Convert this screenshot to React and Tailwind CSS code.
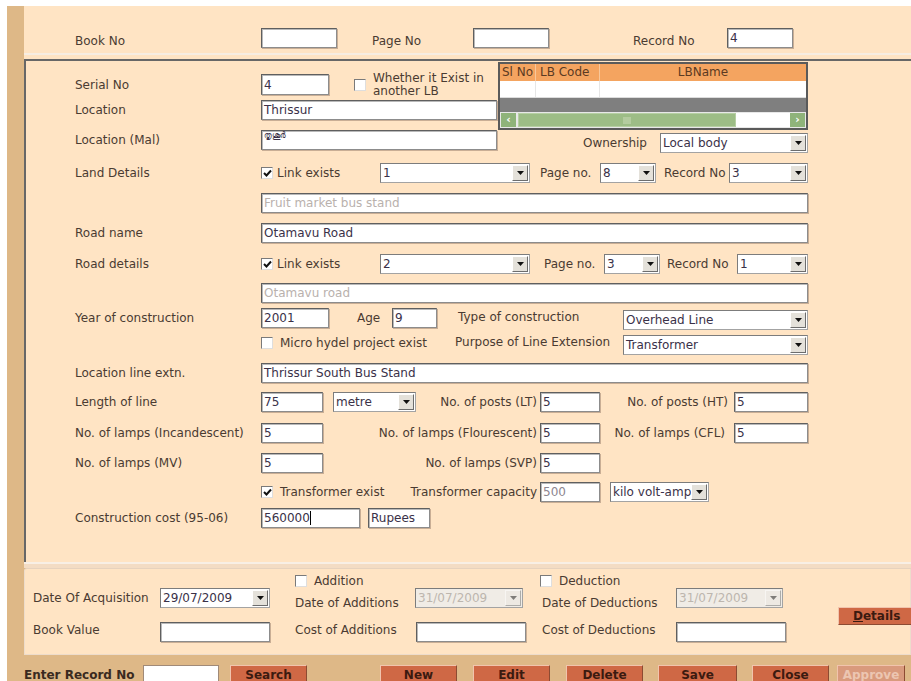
import React from "react";

const Arrow = () => (
  <svg width="7" height="4" viewBox="0 0 7 4">
    <polygon points="0,0 7,0 3.5,4" fill="#111" />
  </svg>
);

function Field({ w, value = "", muted = false, caret = false, h = "h-[20px]" }) {
  return (
    <div
      className={`${h} ${w} shrink-0 bg-white border border-[#5f5f5f] border-b-[#8c8c8c] border-r-[#8c8c8c] shadow-[inset_1px_1px_0_#b9b9b9,1px_1px_0_#c9ae95] px-[2px] flex items-center whitespace-nowrap overflow-hidden ${
        muted ? "text-[#b9b1ad]" : "text-[#3a3148]"
      }`}
    >
      {value}
      {caret && <span className="inline-block w-[1px] h-[14px] bg-black" />}
    </div>
  );
}

function Select({ w, value = "", disabled = false }) {
  return (
    <div
      className={`h-[20px] ${w} shrink-0 flex items-stretch border border-[#a3a3a3] border-t-[#7c7c7c] border-l-[#7c7c7c] ${
        disabled ? "bg-[#f0ece6] text-[#bdb6ae]" : "bg-white text-[#3a3148]"
      }`}
    >
      <div className="flex-1 px-[2px] flex items-center overflow-hidden whitespace-nowrap">{value}</div>
      <div
        className={`w-[16px] my-[1px] mr-[1px] flex items-center justify-center border border-t-white border-l-white border-b-[#6d6d6d] border-r-[#6d6d6d] ${
          disabled ? "bg-[#ebe8e2] opacity-50" : "bg-[#e4e1da]"
        }`}
      >
        <Arrow />
      </div>
    </div>
  );
}

function Check({ checked = false }) {
  return (
    <div className="w-[12px] h-[12px] shrink-0 bg-white border border-[#7a7a7a] border-b-[#dedede] border-r-[#dedede] flex items-center justify-center">
      {checked && (
        <svg width="9" height="8" viewBox="0 0 9 8">
          <path d="M1 4 L3.5 6.5 L8 1.5" stroke="#111" strokeWidth="2" fill="none" />
        </svg>
      )}
    </div>
  );
}

function Label({ w = "w-[186px]", children, className = "" }) {
  return <div className={`${w} shrink-0 whitespace-nowrap ${className}`}>{children}</div>;
}

function Btn({ w, children, faded = false }) {
  return (
    <div
      className={`${w} h-[20px] shrink-0 flex items-center justify-center font-bold border border-t-[#f1c4ad] border-l-[#f1c4ad] border-b-[#8c4b32] border-r-[#8c4b32] ${
        faded ? "bg-[#d99a7d] text-[#ecc6b2]" : "bg-[#cf6845] text-[#3b1a10]"
      }`}
    >
      {children}
    </div>
  );
}

function LbGrid() {
  return (
    <div className="w-[310px] h-[68px] shrink-0 border-2 border-[#5a5a5a] flex flex-col bg-[#7f7f7f]">
      <div className="h-[17px] bg-[#f4a460] flex text-[#5b3a22]">
        <div className="w-[36px] border-r border-[#f8c79a] pl-[2px] leading-[17px]">Sl No</div>
        <div className="w-[64px] border-r border-[#f8c79a] pl-[4px] leading-[17px]">LB Code</div>
        <div className="flex-1 text-center leading-[17px]">LBName</div>
      </div>
      <div className="h-[17px] bg-white flex border-b border-[#dcdcdc]">
        <div className="w-[36px] border-r border-[#e6e6e6]" />
        <div className="w-[64px] border-r border-[#e6e6e6]" />
        <div className="flex-1" />
      </div>
      <div className="flex-1" />
      <div className="h-[16px] bg-[#e8e8e8] flex items-stretch p-[1px]">
        <div className="w-[15px] bg-[#8fb37a] text-white text-[11px] leading-[13px] text-center font-bold">‹</div>
        <div className="w-[218px] ml-[2px] bg-[#9dbd86] border border-[#b6cfa3] flex items-center justify-center">
          <div className="w-[8px] h-[7px] bg-[#b4cc9f]" />
        </div>
        <div className="flex-1 bg-white" />
        <div className="w-[15px] bg-[#8fb37a] text-white text-[11px] leading-[13px] text-center font-bold">›</div>
      </div>
    </div>
  );
}

export default function App() {
  return (
    <div className="w-[911px] h-[681px] overflow-hidden bg-white pt-[6px] pl-[7px] font-['DejaVu_Sans','Verdana',sans-serif] text-[12px] text-[#4a3b32]">
      <div className="h-[675px] bg-[#deb887] pl-[17px] flex flex-col">
        {/* record header */}
        <div className="h-[47px] shrink-0 bg-[#ffe4c4] pl-[51px] pt-[22px] flex items-start">
          <Label className="pt-[6px] leading-[14px]">Book No</Label>
          <Field w="w-[76px]" />
          <Label w="w-[101px]" className="ml-[35px] pt-[6px] leading-[14px]">Page No</Label>
          <Field w="w-[76px]" />
          <Label w="w-[94px]" className="ml-[84px] pt-[6px] leading-[14px]">Record No</Label>
          <Field w="w-[66px]" value="4" />
        </div>
        <div className="h-[2px] shrink-0 bg-[#f7ede2]" />
        <div className="h-[4px] shrink-0 bg-[#ffe4c4]" />

        {/* street light details */}
        <div className="h-[503px] shrink-0 bg-[#ffe4c4] border-t-2 border-l-2 border-[#676767] pl-[49px]">
          <div className="flex mt-[1px]">
            <div className="w-[423px] shrink-0">
              <div className="mt-[12px] h-[21px] flex items-center">
                <Label>Serial No</Label>
                <Field w="w-[68px]" h="h-[21px]" value="4" />
                <div className="ml-[25px]">
                  <Check />
                </div>
                <div className="ml-[7px] leading-[13px] whitespace-nowrap">
                  Whether it Exist in
                  <br />
                  another LB
                </div>
              </div>
              <div className="mt-[5px] h-[20px] flex items-center">
                <Label>Location</Label>
                <Field w="w-[236px]" value="Thrissur" />
              </div>
            </div>
            <LbGrid />
          </div>

          <div className="flex items-start">
            <Label className="h-[20px] flex items-center">Location (Mal)</Label>
            <Field w="w-[236px]" value={<span className="text-[8px] leading-[10px] self-start">തൃശൂർ</span>} />
            <Label w="w-[77px]" className="ml-[86px] mt-[3px] h-[20px] flex items-center">Ownership</Label>
            <div className="mt-[3px]">
              <Select w="w-[148px]" value="Local body" />
            </div>
          </div>

          <div className="mt-[10px] h-[20px] flex items-center">
            <Label>Land Details</Label>
            <div className="w-[119px] shrink-0 flex items-center gap-[4px]">
              <Check checked />
              <span>Link exists</span>
            </div>
            <Select w="w-[150px]" value="1" />
            <Label w="w-[60px]" className="ml-[10px]">Page no.</Label>
            <Select w="w-[56px]" value="8" />
            <Label w="w-[65px]" className="ml-[8px]">Record No</Label>
            <Select w="w-[79px]" value="3" />
          </div>

          <div className="mt-[10px] flex">
            <Label />
            <Field w="w-[547px]" value="Fruit market bus stand" muted />
          </div>

          <div className="mt-[10px] h-[20px] flex items-center">
            <Label>Road name</Label>
            <Field w="w-[547px]" value="Otamavu Road" />
          </div>

          <div className="mt-[11px] h-[20px] flex items-center">
            <Label>Road details</Label>
            <div className="w-[119px] shrink-0 flex items-center gap-[4px]">
              <Check checked />
              <span>Link exists</span>
            </div>
            <Select w="w-[150px]" value="2" />
            <Label w="w-[60px]" className="ml-[14px]">Page no.</Label>
            <Select w="w-[56px]" value="3" />
            <Label w="w-[70px]" className="ml-[7px]">Record No</Label>
            <Select w="w-[71px]" value="1" />
          </div>

          <div className="mt-[9px] flex">
            <Label />
            <Field w="w-[547px]" value="Otamavu road" muted />
          </div>

          <div className="mt-[5px] flex items-start">
            <Label className="h-[20px] flex items-center">Year of construction</Label>
            <Field w="w-[68px]" value="2001" />
            <Label w="w-[35px]" className="ml-[28px] h-[20px] flex items-center">Age</Label>
            <Field w="w-[45px]" value="9" />
            <Label w="w-[165px]" className="ml-[21px] h-[18px] flex items-center">Type of construction</Label>
            <div className="mt-[2px]">
              <Select w="w-[185px]" value="Overhead Line" />
            </div>
          </div>

          <div className="mt-[4px] flex items-start">
            <Label />
            <div className="w-[194px] shrink-0 h-[17px] flex items-center gap-[7px]">
              <Check />
              <span className="whitespace-nowrap">Micro hydel project exist</span>
            </div>
            <Label w="w-[168px]" className="h-[16px] flex items-center">Purpose of Line Extension</Label>
            <div className="mt-[1px]">
              <Select w="w-[185px]" value="Transformer" />
            </div>
          </div>

          <div className="mt-[8px] h-[20px] flex items-center">
            <Label>Location line extn.</Label>
            <Field w="w-[547px]" value="Thrissur South Bus Stand" />
          </div>

          <div className="mt-[9px] h-[20px] flex items-center">
            <Label>Length of line</Label>
            <Field w="w-[62px]" value="75" />
            <div className="ml-[10px]">
              <Select w="w-[83px]" value="metre" />
            </div>
            <Label w="w-[124px]" className="text-right pr-[3px]">No. of posts (LT)</Label>
            <Field w="w-[60px]" value="5" />
            <Label w="w-[134px]" className="text-right pr-[6px]">No. of posts (HT)</Label>
            <Field w="w-[74px]" value="5" />
          </div>

          <div className="mt-[11px] h-[20px] flex items-center">
            <Label>No. of lamps (Incandescent)</Label>
            <Field w="w-[62px]" value="5" />
            <Label w="w-[217px]" className="text-right pr-[3px]">No. of lamps (Flourescent)</Label>
            <Field w="w-[60px]" value="5" />
            <Label w="w-[134px]" className="text-right pr-[9px]">No. of lamps (CFL)</Label>
            <Field w="w-[74px]" value="5" />
          </div>

          <div className="mt-[10px] h-[20px] flex items-center">
            <Label>No. of lamps (MV)</Label>
            <Field w="w-[62px]" value="5" muted={false} />
            <Label w="w-[217px]" className="text-right pr-[3px]">No. of lamps (SVP)</Label>
            <Field w="w-[60px]" value="5" />
          </div>

          <div className="mt-[9px] h-[20px] flex items-center">
            <Label />
            <div className="w-[279px] shrink-0 flex items-center justify-between pr-[3px]">
              <div className="flex items-center gap-[7px]">
                <Check checked />
                <span className="whitespace-nowrap">Transformer exist</span>
              </div>
              <span className="whitespace-nowrap">Transformer capacity</span>
            </div>
            <Field w="w-[60px]" value={<span className="text-[#8d8690]">500</span>} />
            <div className="ml-[10px]">
              <Select w="w-[99px]" value="kilo volt-amp" />
            </div>
          </div>

          <div className="mt-[6px] h-[20px] flex items-center">
            <Label>Construction cost (95-06)</Label>
            <Field w="w-[99px]" value="560000" caret />
            <div className="ml-[8px]">
              <Field w="w-[62px]" value="Rupees" />
            </div>
          </div>
        </div>

        <div className="h-[2px] shrink-0 bg-[#f8efe5]" />
        <div className="h-[4px] shrink-0 bg-[#f3dcc4]" />

        {/* asset valuation */}
        <div className="h-[87px] shrink-0 bg-[#ffe4c4] border border-[#eddccb] border-t-[#e6d2be] rounded-tl-[3px] pl-[8px] pt-[6px] flex text-[#4a3b32]">
          <div className="w-[237px] shrink-0 flex flex-col">
            <div className="h-[11px]" />
            <div className="mt-[2px] h-[20px] flex items-center">
              <Label w="w-[127px]">Date Of Acquisition</Label>
              <Select w="w-[110px]" value="29/07/2009" />
            </div>
            <div className="mt-[14px] h-[20px] flex items-center">
              <Label w="w-[127px]" className="-mt-[5px]">Book Value</Label>
              <Field w="w-[110px]" />
            </div>
          </div>

          <div className="ml-[25px] w-[231px] shrink-0 flex flex-col">
            <div className="h-[11px] flex items-center gap-[7px]">
              <Check />
              <span>Addition</span>
            </div>
            <div className="mt-[2px] h-[20px] flex items-center">
              <Label w="w-[120px]" className="mt-[9px]">Date of Additions</Label>
              <Select w="w-[108px]" value="31/07/2009" disabled />
            </div>
            <div className="mt-[14px] h-[20px] flex items-center">
              <Label w="w-[121px]" className="-mt-[5px]">Cost of Additions</Label>
              <Field w="w-[110px]" />
            </div>
          </div>

          <div className="ml-[14px] w-[246px] shrink-0 flex flex-col">
            <div className="h-[11px] flex items-center gap-[7px]">
              <Check />
              <span>Deduction</span>
            </div>
            <div className="mt-[2px] h-[20px] flex items-center">
              <Label w="w-[136px]" className="mt-[9px] pl-[2px]">Date of Deductions</Label>
              <Select w="w-[107px]" value="31/07/2009" disabled />
            </div>
            <div className="mt-[14px] h-[20px] flex items-center">
              <Label w="w-[136px]" className="-mt-[5px] pl-[2px]">Cost of Deductions</Label>
              <Field w="w-[110px]" />
            </div>
          </div>

          <div className="ml-[52px] pt-[32px]">
            <div className="w-[80px] h-[18px] bg-[#cf6845] border border-t-[#f1c4ad] border-l-[#f1c4ad] border-b-[#8c4b32] border-r-[#8c4b32] flex items-center pl-[14px] font-bold text-[#3b1a10]">
              <span className="underline">D</span>etails
            </div>
          </div>
        </div>

        {/* record actions */}
        <div className="mt-[10px] flex items-start">
          <div className="w-[119px] shrink-0 h-[20px] flex items-center font-bold text-[#3a2a20] whitespace-nowrap">Enter Record No</div>
          <div className="w-[76px] h-[20px] shrink-0 bg-white border border-[#a08a78]" />
          <div className="ml-[11px]">
            <Btn w="w-[77px]">Search</Btn>
          </div>
          <div className="ml-[73px]">
            <Btn w="w-[77px]">New</Btn>
          </div>
          <div className="ml-[16px]">
            <Btn w="w-[77px]">Edit</Btn>
          </div>
          <div className="ml-[16px]">
            <Btn w="w-[77px]">Delete</Btn>
          </div>
          <div className="ml-[15px]">
            <Btn w="w-[79px]">Save</Btn>
          </div>
          <div className="ml-[15px]">
            <Btn w="w-[77px]">Close</Btn>
          </div>
          <div className="ml-[8px]">
            <Btn w="w-[68px]" faded>Approve</Btn>
          </div>
        </div>
      </div>
    </div>
  );
}
